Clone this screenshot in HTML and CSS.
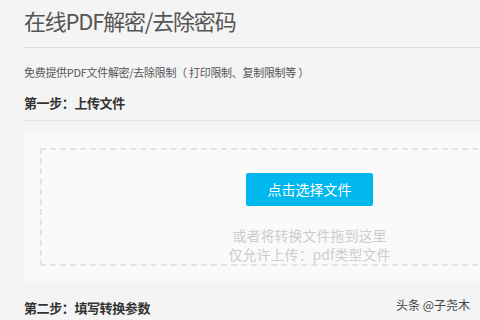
FILE: index.html
```html
<!DOCTYPE html>
<html lang="zh">
<head>
<meta charset="utf-8">
<link rel="stylesheet" href="styles.css">
</head>
<body>
<div class="page">
  <h1 class="title">在线PDF解密/去除密码</h1>
  <p class="desc">免费提供PDF文件解密/去除限制（ 打印限制、复制限制等 ）</p>
  <h2 class="step">第一步：上传文件</h2>
  <div class="panel">
    <div class="drop">
      <div class="btn">点击选择文件</div>
      <div class="hint">或者将转换文件拖到这里</div>
      <div class="hint">仅允许上传：pdf类型文件</div>
    </div>
  </div>
  <h2 class="step step2">第二步：填写转换参数</h2>
</div>
<div class="mark">头条 @子尧木</div>
</body>
</html>
```
FILE: styles.css
```css
html, body {
  margin: 0;
  padding: 0;
  width: 480px;
  height: 320px;
  overflow: hidden;
  background: #f4f4f4;
  font-family: "Noto Sans CJK SC", "Noto Sans", sans-serif;
}
.page {
  width: 571px;
  padding-left: 24px;
}
.title {
  margin: 0;
  padding-top: 2px;
  height: 45px;
  line-height: 36px;
  font-size: 22px;
  letter-spacing: -1.2px;
  font-weight: normal;
  color: #555;
  border-bottom: 1px solid #dedede;
}
.desc {
  margin: 0;
  padding-top: 15px;
  line-height: 18px;
  font-size: 11px;
  letter-spacing: -0.3px;
  color: #555;
}
.step {
  margin: 0;
  padding-top: 12px;
  height: 27px;
  line-height: 20px;
  font-size: 13px;
  letter-spacing: -0.4px;
  font-weight: bold;
  color: #333;
  border-bottom: 1px solid #e2e2e2;
}
.panel {
  margin-top: 12px;
  background: #fafafa;
  padding: 15px 16px;
}
.drop {
  border: 2px dashed #e3e3e3;
  height: 114px;
  display: flex;
  flex-direction: column;
  align-items: center;
  box-sizing: content-box;
}
.btn {
  margin-top: 23px;
  width: 127px;
  height: 33px;
  line-height: 33px;
  text-align: center;
  background: #00b7ee;
  color: #fff;
  font-size: 14px;
  border-radius: 2px;
  margin-bottom: 20px;
}
.hint {
  font-size: 14px;
  line-height: 19px;
  color: #cdcdcd;
}
.step2 {
  padding-top: 17px;
  border-bottom: none;
}
.mark {
  position: absolute;
  left: 396px;
  top: 296px;
  font-size: 12px;
  line-height: 18px;
  color: #444;
}
```
